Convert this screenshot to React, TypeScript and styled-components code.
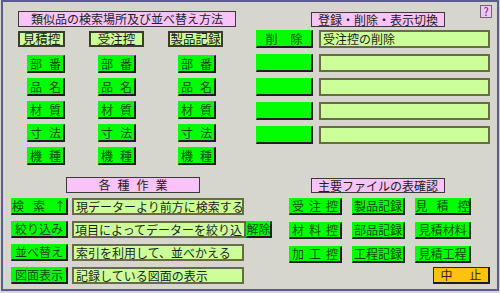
import React from 'react';
import styled, { createGlobalStyle } from 'styled-components';

const GlobalStyle = createGlobalStyle`
  html, body {
    margin: 0;
    padding: 0;
    background: #d6d6ce;
  }
  body {
    font-family: "Noto Sans CJK JP", "Noto Sans", sans-serif;
    font-size: 12px;
    color: #1e1e1e;
  }
`;

const Frame = styled.div`
  position: relative;
  box-sizing: border-box;
  width: 498px;
  height: 291px;
  margin-left: 1px;
  border: 2px solid #5c5c94;
  background: #d6d6ce;
  display: flex;
  flex-direction: column;
`;

const TopRow = styled.div`
  display: flex;
  gap: 20px;
  padding: 9px 0 0 15px;
`;

const BottomRow = styled.div`
  display: flex;
  gap: 18px;
  margin-top: 12px;
  padding-left: 8px;
`;

const Panel = styled.div<{ $w: number }>`
  display: flex;
  flex-direction: column;
  width: ${(p) => p.$w}px;
`;

const Title = styled.div<{ $w: number; $h?: number; $ml?: number; $mt?: number }>`
  box-sizing: border-box;
  width: ${(p) => p.$w}px;
  height: ${(p) => p.$h ?? 16}px;
  margin-left: ${(p) => p.$ml ?? 0}px;
  margin-top: ${(p) => p.$mt ?? 0}px;
  background: #f8c4f8;
  border: 1px solid #3a3a3a;
  display: flex;
  align-items: center;
  justify-content: center;
  font-size: 12px;
  line-height: 1;
  color: #202020;
  white-space: nowrap;
`;

const Spaced = styled.span<{ $sp?: number }>`
  letter-spacing: ${(p) => p.$sp ?? 0}px;
  margin-right: ${(p) => -(p.$sp ?? 0)}px;
  white-space: nowrap;
`;

const SearchGrid = styled.div`
  display: grid;
  grid-template-columns: 47px 55px 55px;
  column-gap: 24px;
  margin-top: 4px;
`;

const SearchColumn = styled.div<{ $indent: number }>`
  display: flex;
  flex-direction: column;
  gap: 5px;

  & > button {
    margin-left: ${(p) => p.$indent}px;
  }
  & > button:first-of-type {
    margin-top: 3px;
  }
`;

const PlaceLabel = styled.div`
  box-sizing: border-box;
  height: 16px;
  background: #ccff99;
  border: 2px solid #3c3c2c;
  display: flex;
  align-items: center;
  justify-content: center;
  font-size: 12.5px;
  line-height: 1;
  white-space: nowrap;
  color: #1a1a1a;
`;

const GreenButton = styled.button<{ $w: number; $h?: number; $tone?: 'green' | 'orange' }>`
  box-sizing: border-box;
  appearance: none;
  width: ${(p) => p.$w}px;
  height: ${(p) => p.$h ?? 18}px;
  padding: 0;
  margin: 0;
  background: ${(p) => (p.$tone === 'orange' ? '#ffc20e' : '#00ff00')};
  border: none;
  border-top: 1px solid ${(p) => (p.$tone === 'orange' ? '#2a2a2a' : '#00ff00')};
  border-left: 1px solid ${(p) => (p.$tone === 'orange' ? '#2a2a2a' : '#00ff00')};
  border-right: 2px solid #1e1e1e;
  border-bottom: 2px solid #1e1e1e;
  display: flex;
  align-items: center;
  justify-content: center;
  font-family: inherit;
  font-size: 12px;
  line-height: 1;
  white-space: nowrap;
  color: ${(p) => (p.$tone === 'orange' ? '#3a2400' : '#0c4a0c')};
  flex-shrink: 0;
  cursor: pointer;
`;

const Rows = styled.div<{ $gap: number; $mt: number }>`
  display: flex;
  flex-direction: column;
  gap: ${(p) => p.$gap}px;
  margin-top: ${(p) => p.$mt}px;
`;

const Row = styled.div<{ $gap: number }>`
  display: flex;
  align-items: stretch;
  gap: ${(p) => p.$gap}px;
`;

const Field = styled.div<{ $w: number; $h?: number; $pad?: number }>`
  box-sizing: border-box;
  width: ${(p) => p.$w}px;
  height: ${(p) => p.$h ?? 18}px;
  background: #ccff99;
  border: 2px solid #6a6a48;
  padding-left: ${(p) => p.$pad ?? 2}px;
  display: flex;
  align-items: center;
  font-size: 12px;
  line-height: 1;
  white-space: nowrap;
  overflow: hidden;
  color: #1e1e1e;
  flex-shrink: 0;
`;

const FileGrid = styled.div`
  display: grid;
  grid-template-columns: 53px 53px 56px;
  column-gap: 10px;
  row-gap: 7px;
  margin-top: 5px;
`;

const CancelWrap = styled.div`
  display: flex;
  justify-content: flex-end;
  margin-top: 4px;
`;

const HelpBadge = styled.div`
  position: absolute;
  top: 3px;
  right: 5px;
  box-sizing: border-box;
  width: 12px;
  height: 13px;
  background: #f8c4f8;
  border: 1px solid #6a6a6a;
  display: flex;
  align-items: center;
  justify-content: center;
  font-size: 11px;
  line-height: 1;
  color: #4a2a6a;
`;

const places = [
  { label: '見積控', indent: 9 },
  { label: '受注控', indent: 9 },
  { label: '製品記録', indent: 10 },
];

const fields = ['部番', '品名', '材質', '寸法', '機種'];

const switchRows = ['受注控の削除', '', '', '', ''];

const works = [
  { label: '検索↑', sp: 9, text: '現データーより前方に検索する' },
  { label: '絞り込み', sp: 0, text: '項目によってデーターを絞り込', clear: true },
  { label: '並べ替え', sp: 0, text: '索引を利用して、並べかえる' },
  { label: '図面表示', sp: 0, text: '記録している図面の表示' },
];

const files = [
  { label: '受注控', sp: 5 },
  { label: '製品記録', sp: 0 },
  { label: '見積控', sp: 9 },
  { label: '材料控', sp: 5 },
  { label: '部品記録', sp: 0 },
  { label: '見積材料', sp: 0 },
  { label: '加工控', sp: 5 },
  { label: '工程記録', sp: 0 },
  { label: '見積工程', sp: 0 },
];

export default function App() {
  return (
    <>
      <GlobalStyle />
      <Frame>
        <HelpBadge>?</HelpBadge>
        <TopRow>
          <Panel $w={218}>
            <Title $w={218}>類似品の検索場所及び並べ替え方法</Title>
            <SearchGrid>
              {places.map((p) => (
                <SearchColumn key={p.label} $indent={p.indent}>
                  <PlaceLabel>{p.label}</PlaceLabel>
                  {fields.map((f) => (
                    <GreenButton key={f} $w={38}>
                      <Spaced $sp={7}>{f}</Spaced>
                    </GreenButton>
                  ))}
                </SearchColumn>
              ))}
            </SearchGrid>
          </Panel>
          <Panel $w={234}>
            <Title $w={134} $h={15} $ml={55} $mt={1}>
              登録・削除・表示切換
            </Title>
            <Rows $gap={6} $mt={3}>
              {switchRows.map((t, i) => (
                <Row key={i} $gap={6}>
                  <GreenButton $w={57}>{i === 0 && <Spaced $sp={13}>削除</Spaced>}</GreenButton>
                  <Field $w={171}>{t}</Field>
                </Row>
              ))}
            </Rows>
          </Panel>
        </TopRow>
        <BottomRow>
          <Panel $w={260}>
            <Title $w={134} $ml={55}>
              <Spaced $sp={7}>各種作業</Spaced>
            </Title>
            <Rows $gap={6} $mt={5}>
              {works.map((w) => (
                <Row key={w.label} $gap={4}>
                  <GreenButton $w={57} $h={17}>
                    <Spaced $sp={w.sp}>{w.label}</Spaced>
                  </GreenButton>
                  {w.clear ? (
                    <Row $gap={0}>
                      <Field $w={174} $h={17} $pad={1}>
                        {w.text}
                      </Field>
                      <GreenButton $w={26} $h={17}>
                        解除
                      </GreenButton>
                    </Row>
                  ) : (
                    <Field $w={172} $h={17}>
                      {w.text}
                    </Field>
                  )}
                </Row>
              ))}
            </Rows>
          </Panel>
          <Panel $w={201}>
            <Title $w={134} $h={15} $ml={22} $mt={1}>
              主要ファイルの表確認
            </Title>
            <FileGrid>
              {files.map((f, i) => (
                <GreenButton key={f.label} $w={i % 3 === 2 ? 56 : 53} $h={17}>
                  <Spaced $sp={f.sp}>{f.label}</Spaced>
                </GreenButton>
              ))}
            </FileGrid>
            <CancelWrap>
              <GreenButton $w={57} $h={17} $tone="orange">
                <Spaced $sp={17}>中止</Spaced>
              </GreenButton>
            </CancelWrap>
          </Panel>
        </BottomRow>
      </Frame>
    </>
  );
}
